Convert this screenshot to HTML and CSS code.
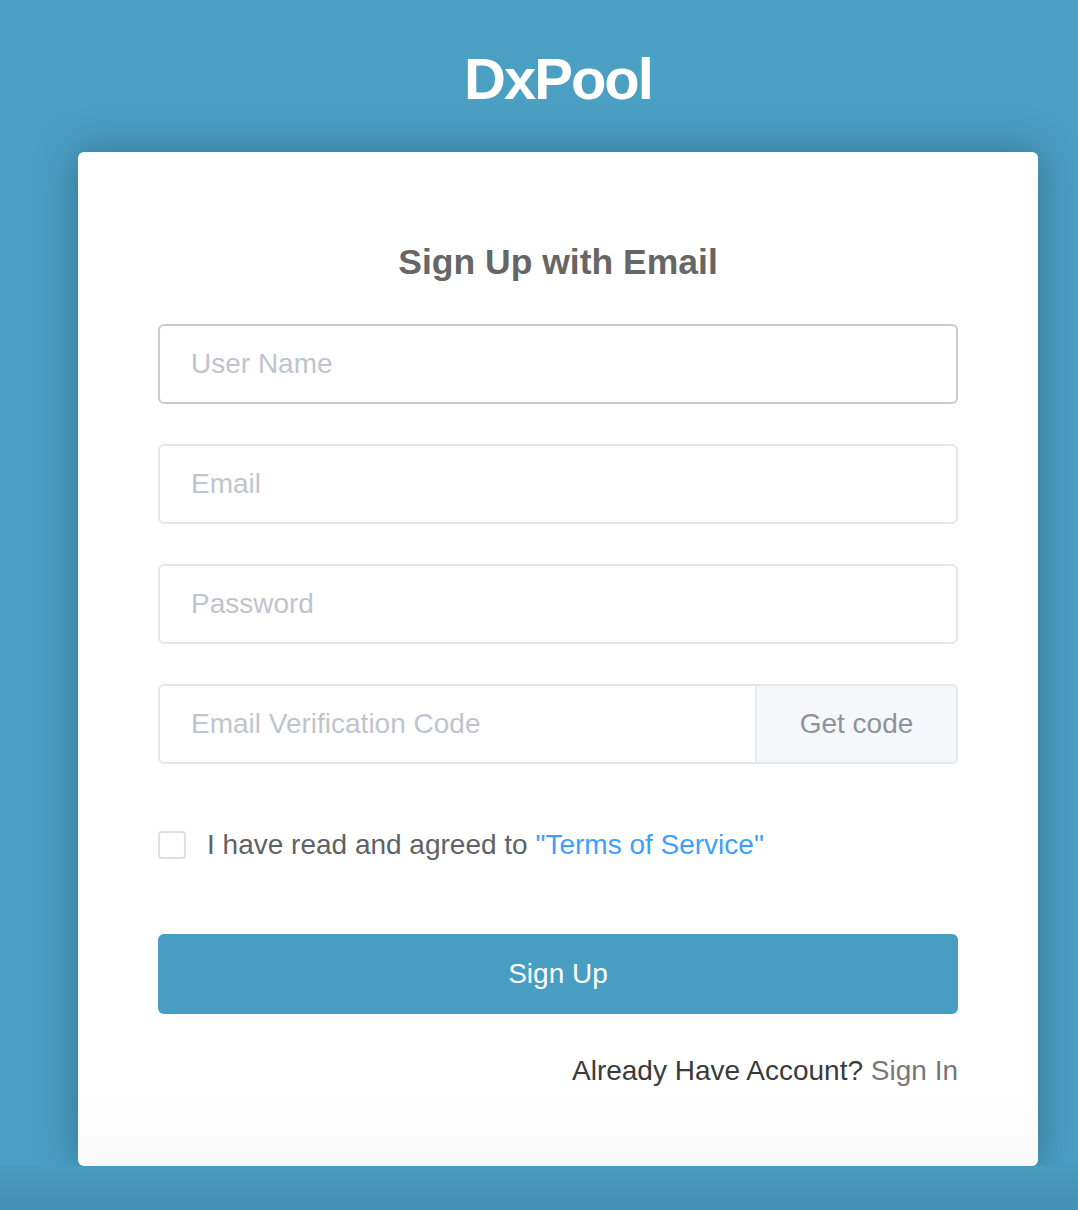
FILE: index.html
```html
<!DOCTYPE html>
<html lang="en">

<head>
    <meta charset="UTF-8">
    <meta name="viewport" content="width=device-width, initial-scale=1.0">
    <title>DxPool - Sign Up</title>
    <link rel="stylesheet" href="styles.css">
</head>

<body>
    <div class="page">
        <div class="header">
            <div class="logo">DxPool</div>
        </div>

        <div class="card">
            <h2 class="card-title">Sign Up with Email</h2>

            <form class="signup-form" onsubmit="return false">
                <div class="form-item">
                    <input class="input input-hover" type="text" placeholder="User Name">
                </div>
                <div class="form-item">
                    <input class="input" type="text" placeholder="Email">
                </div>
                <div class="form-item">
                    <input class="input" type="password" placeholder="Password">
                </div>
                <div class="form-item input-group">
                    <input class="input" type="text" placeholder="Email Verification Code">
                    <div class="input-append">Get code</div>
                </div>

                <label class="agree">
                    <span class="checkbox"></span>
                    <span class="agree-text">I have read and agreed to <a href="#" class="terms">"Terms of Service"</a></span>
                </label>

                <button class="btn-signup" type="submit">Sign Up</button>

                <div class="signin-line">
                    Already Have Account? <a href="#" class="signin-link">Sign In</a>
                </div>
            </form>
        </div>
    </div>

    <div class="footer"></div>
</body>

</html>
```

FILE: styles.css
```css
body {
    margin: 0;
    padding: 0;
    background-color: #4a9fc3;
    font-family: 'Liberation Sans', Arial, sans-serif;
}

.page {
    width: 960px;
    margin-left: 78px;
}

.header {
    height: 152px;
    display: flex;
    justify-content: center;
    align-items: center;
}

.logo {
    color: #fff;
    font-size: 58px;
    font-weight: bold;
    letter-spacing: -2px;
    line-height: 1;
    margin-top: 6px;
}

.card {
    box-sizing: border-box;
    padding: 90px 80px 75px;
    background: linear-gradient(#fff 93%, #f9f9f9);
    border-radius: 6px;
    box-shadow: 0 0 40px rgba(20, 60, 80, 0.45);
}

.card-title {
    margin: 0 0 42px;
    text-align: center;
    font-size: 35.5px;
    line-height: 40px;
    color: #666;
}

.form-item {
    margin-bottom: 40px;
}

.input {
    display: block;
    width: 100%;
    height: 80px;
    box-sizing: border-box;
    padding: 0 31px;
    border: 2px solid #e4e7ed;
    border-radius: 6px;
    font-family: inherit;
    font-size: 28px;
    color: #606266;
    outline: none;
}

.input::placeholder {
    color: #c0c4cc;
}

.input-hover {
    border-color: #c8cbd2;
}

.input-group {
    display: flex;
}

.input-group .input {
    flex: 1;
    border-radius: 6px 0 0 6px;
}

.input-append {
    width: 201px;
    height: 80px;
    box-sizing: border-box;
    display: flex;
    justify-content: center;
    align-items: center;
    background-color: #f5f7fa;
    border: 2px solid #e4e7ed;
    border-left: none;
    border-radius: 0 6px 6px 0;
    color: #909399;
    font-size: 28px;
}

.agree {
    display: flex;
    align-items: center;
    height: 40px;
    margin-top: 61px;
    cursor: pointer;
}

.checkbox {
    width: 28px;
    height: 28px;
    box-sizing: border-box;
    border: 2px solid #dcdfe6;
    border-radius: 4px;
    background: #fff;
    margin-right: 21px;
}

.agree-text {
    font-size: 28px;
    color: #606266;
}

.terms {
    color: #409eff;
    text-decoration: none;
}

.btn-signup {
    display: block;
    width: 100%;
    height: 80px;
    margin-top: 69px;
    border: none;
    border-radius: 6px;
    background-color: #479ec2;
    color: #fff;
    font-family: inherit;
    font-size: 28px;
    cursor: pointer;
}

.signin-line {
    margin-top: 37px;
    text-align: right;
    font-size: 28px;
    line-height: 40px;
    color: #3a3a3a;
}

.signin-link {
    color: #777;
    text-decoration: none;
}

.footer {
    height: 60px;
    background: linear-gradient(#479bbf, #428daf);
}
```
